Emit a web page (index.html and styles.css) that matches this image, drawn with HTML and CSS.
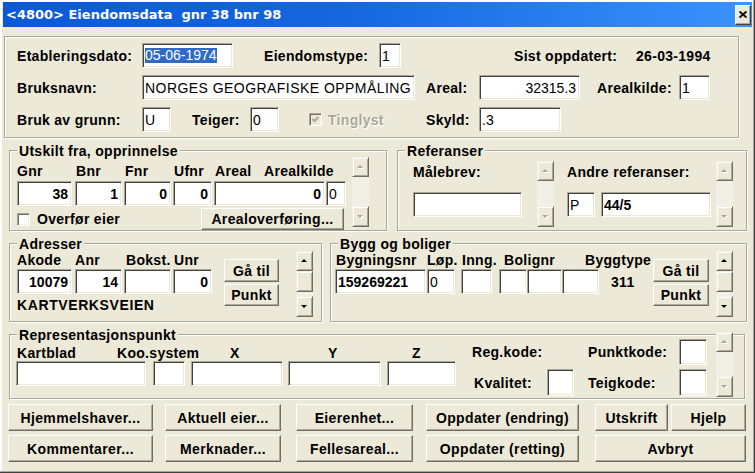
FILE: index.html
```html
<!DOCTYPE html>
<html lang="no">
<head>
<meta charset="utf-8">
<title>Eiendomsdata</title>
<link rel="stylesheet" href="styles.css">
</head>
<body>
<div class="win">
  <div class="titlebar">
    <span class="title">&lt;4800&gt; Eiendomsdata  gnr 38 bnr 98</span>
    <span class="close"><svg width="8" height="7" viewBox="0 0 8 7"><path d="M0.5 0.5 L7.5 6.5 M7.5 0.5 L0.5 6.5" stroke="#000" stroke-width="1.9"/></svg></span>
  </div>

  <div class="panel">
    <div class="prow">
      <span class="lbl c-lab">Etableringsdato:</span>
      <span class="fld f-dato"><span class="sel">05-06-1974</span></span>
      <span class="lbl l-etype">Eiendomstype:</span>
      <span class="fld f-etype">1</span>
      <span class="lbl l-sist">Sist oppdatert:</span>
      <span class="lbl">26-03-1994</span>
    </div>
    <div class="prow">
      <span class="lbl c-lab">Bruksnavn:</span>
      <span class="fld f-navn">NORGES GEOGRAFISKE OPPMÅLING</span>
      <span class="lbl l-areal">Areal:</span>
      <span class="fld f-areal num">32315.3</span>
      <span class="lbl l-akilde">Arealkilde:</span>
      <span class="fld f-akilde">1</span>
    </div>
    <div class="prow">
      <span class="lbl c-lab">Bruk av grunn:</span>
      <span class="fld f-bruk">U</span>
      <span class="lbl l-teiger">Teiger:</span>
      <span class="fld f-teiger">0</span>
      <span class="tingl">
        <span class="chk dis"><svg width="9" height="9" viewBox="0 0 9 9"><path d="M1.5 4 L3.5 6 L7.5 2" fill="none" stroke="#aca899" stroke-width="2"/></svg></span>
        <span class="dtext">Tinglyst</span>
      </span>
      <span class="lbl l-skyld">Skyld:</span>
      <span class="fld f-skyld">.3</span>
    </div>
  </div>

  <div class="mrow mrow1">
    <div class="grp g-utsk">
      <div class="gt">Utskilt fra, opprinnelse</div>
      <div class="gbody ub">
        <div class="ucol">
          <div class="labrow">
            <span class="lbl u-gnr">Gnr</span>
            <span class="lbl u-bnr">Bnr</span>
            <span class="lbl u-fnr">Fnr</span>
            <span class="lbl u-ufnr">Ufnr</span>
            <span class="lbl u-areal">Areal</span>
            <span class="lbl">Arealkilde</span>
          </div>
          <div class="inrow">
            <span class="fld num b ui-gnr">38</span>
            <span class="fld num b ui-bnr">1</span>
            <span class="fld num b ui-fnr">0</span>
            <span class="fld num b ui-ufnr">0</span>
            <span class="fld num b ui-areal">0</span>
            <span class="fld ui-akilde">0</span>
          </div>
          <div class="ubottom">
            <span class="chk"></span>
            <span class="lbl l-overfor">Overfør eier</span>
            <span class="btn b-arealov">Arealoverføring...</span>
          </div>
        </div>
        <div class="sb dis sb-u">
          <span class="sb-btn"><svg width="9" height="6" viewBox="0 0 9 6"><polygon points="2,5 5,2 8,5" fill="#fff"/><polygon points="1,4 4,1 7,4" fill="#aca899"/></svg></span>
          <span class="sb-track"></span>
          <span class="sb-btn"><svg width="9" height="6" viewBox="0 0 9 6"><polygon points="2,2 8,2 5,5" fill="#fff"/><polygon points="1,1 7,1 4,4" fill="#aca899"/></svg></span>
        </div>
      </div>
    </div>

    <div class="grp g-ref">
      <div class="gt">Referanser</div>
      <div class="gbody rb">
        <div class="rcol1">
          <div class="lbl">Målebrev:</div>
          <span class="fld ri-male"></span>
        </div>
        <div class="sb dis sb-r1">
          <span class="sb-btn"><svg width="9" height="6" viewBox="0 0 9 6"><polygon points="2,5 5,2 8,5" fill="#fff"/><polygon points="1,4 4,1 7,4" fill="#aca899"/></svg></span>
          <span class="sb-track"></span>
          <span class="sb-btn"><svg width="9" height="6" viewBox="0 0 9 6"><polygon points="2,2 8,2 5,5" fill="#fff"/><polygon points="1,1 7,1 4,4" fill="#aca899"/></svg></span>
        </div>
        <div class="rcol2">
          <div class="lbl">Andre referanser:</div>
          <div class="inrow rin">
            <span class="fld ri-p">P</span>
            <span class="fld b ri-ref">44/5</span>
          </div>
        </div>
        <div class="sb dis sb-r2">
          <span class="sb-btn"><svg width="9" height="6" viewBox="0 0 9 6"><polygon points="2,5 5,2 8,5" fill="#fff"/><polygon points="1,4 4,1 7,4" fill="#aca899"/></svg></span>
          <span class="sb-track"></span>
          <span class="sb-btn"><svg width="9" height="6" viewBox="0 0 9 6"><polygon points="2,2 8,2 5,5" fill="#fff"/><polygon points="1,1 7,1 4,4" fill="#aca899"/></svg></span>
        </div>
      </div>
    </div>
  </div>

  <div class="mrow mrow2">
    <div class="grp g-adr">
      <div class="gt">Adresser</div>
      <div class="gbody ab">
        <div class="acol">
          <div class="labrow">
            <span class="lbl a-akode">Akode</span>
            <span class="lbl a-anr">Anr</span>
            <span class="lbl a-bokst">Bokst.</span>
            <span class="lbl">Unr</span>
          </div>
          <div class="inrow ain">
            <span class="fld num b ai-akode">10079</span>
            <span class="fld num b ai-anr">14</span>
            <span class="fld ai-bokst"></span>
            <span class="fld num b ai-unr">0</span>
          </div>
          <div class="lbl street">KARTVERKSVEIEN</div>
        </div>
        <div class="sbtns abtns">
          <span class="btn b-ga">Gå til</span>
          <span class="btn b-punkt">Punkt</span>
        </div>
        <div class="sb sb-a">
          <span class="sb-btn"><svg width="9" height="6" viewBox="0 0 9 6"><polygon points="1,4 4,1 7,4" fill="#000"/></svg></span>
          <span class="sb-thumb"></span>
          <span class="sb-track"></span>
          <span class="sb-btn"><svg width="9" height="6" viewBox="0 0 9 6"><polygon points="1,1 7,1 4,4" fill="#000"/></svg></span>
        </div>
      </div>
    </div>

    <div class="grp g-bygg">
      <div class="gt">Bygg og boliger</div>
      <div class="gbody bb">
        <div class="bcol">
          <div class="labrow">
            <span class="lbl y-bnr">Bygningsnr</span>
            <span class="lbl y-lop">Løp.</span>
            <span class="lbl y-inng">Inng.</span>
            <span class="lbl y-bolig">Bolignr</span>
            <span class="lbl">Byggtype</span>
          </div>
          <div class="inrow bin">
            <span class="fld b yi-bnr">159269221</span>
            <span class="fld yi-lop">0</span>
            <span class="fld yi-inng"></span>
            <span class="fld yi-b1"></span>
            <span class="fld yi-b2"></span>
            <span class="fld yi-b3"></span>
            <span class="lbl btype">311</span>
          </div>
        </div>
        <div class="sbtns bbtns">
          <span class="btn b-ga">Gå til</span>
          <span class="btn b-punkt">Punkt</span>
        </div>
        <div class="sb sb-b">
          <span class="sb-btn"><svg width="9" height="6" viewBox="0 0 9 6"><polygon points="1,4 4,1 7,4" fill="#000"/></svg></span>
          <span class="sb-thumb"></span>
          <span class="sb-track"></span>
          <span class="sb-btn"><svg width="9" height="6" viewBox="0 0 9 6"><polygon points="1,1 7,1 4,4" fill="#000"/></svg></span>
        </div>
      </div>
    </div>
  </div>

  <div class="grp g-rep">
    <div class="gt">Representasjonspunkt</div>
    <div class="gbody pb">
      <div class="rpa">
        <div class="labrow">
          <span class="lbl p-kart">Kartblad</span>
          <span class="lbl p-koo">Koo.system</span>
          <span class="lbl p-x">X</span>
          <span class="lbl p-y">Y</span>
          <span class="lbl">Z</span>
        </div>
        <div class="inrow">
          <span class="fld pi-kart"></span>
          <span class="fld pi-koo"></span>
          <span class="fld pi-x"></span>
          <span class="fld pi-y"></span>
          <span class="fld pi-z"></span>
        </div>
      </div>
      <div class="rpb">
        <span class="lbl">Reg.kode:</span>
        <span></span>
        <span class="lbl">Punktkode:</span>
        <span class="fld pi-small1"></span>
        <span class="lbl l-kval">Kvalitet:</span>
        <span class="fld pi-kval"></span>
        <span class="lbl">Teigkode:</span>
        <span class="fld pi-small2"></span>
      </div>
      <div class="sb dis sb-p">
        <span class="sb-btn"><svg width="9" height="6" viewBox="0 0 9 6"><polygon points="2,5 5,2 8,5" fill="#fff"/><polygon points="1,4 4,1 7,4" fill="#aca899"/></svg></span>
        <span class="sb-track"></span>
        <span class="sb-btn"><svg width="9" height="6" viewBox="0 0 9 6"><polygon points="2,2 8,2 5,5" fill="#fff"/><polygon points="1,1 7,1 4,4" fill="#aca899"/></svg></span>
      </div>
    </div>
  </div>

  <div class="brow brow1">
    <span class="btn k1">Hjemmelshaver...</span>
    <span class="btn k2">Aktuell eier...</span>
    <span class="btn k3">Eierenhet...</span>
    <span class="btn k4">Oppdater (endring)</span>
    <span class="btn k5">Utskrift</span>
    <span class="btn k6">Hjelp</span>
  </div>
  <div class="brow brow2">
    <span class="btn k1">Kommentarer...</span>
    <span class="btn k2">Merknader...</span>
    <span class="btn k3">Fellesareal...</span>
    <span class="btn k4">Oppdater (retting)</span>
    <span class="btn k7">Avbryt</span>
  </div>
</div>
</body>
</html>
```

FILE: styles.css
```css
* { box-sizing: border-box; }
html, body { margin: 0; padding: 0; }
body {
  width: 755px;
  height: 473px;
  overflow: hidden;
  background: #ece9d8;
  font-family: "Liberation Sans", Arial, sans-serif;
  font-size: 14px;
  line-height: 16px;
  color: #000;
}
.win {
  width: 755px;
  height: 473px;
  padding-top: 2px;
  background: #ece9d8;
  box-shadow: inset -1px -1px #404040, inset -2px -2px #aca899, inset 2px 2px #fff;
}

/* title bar */
.titlebar {
  margin: 0 3px;
  height: 25px;
  display: flex;
  align-items: center;
  padding: 0 1px 0 3px;
  background: linear-gradient(90deg, #0a58d6 0%, #1566df 45%, #3b93fd 100%);
}
.title {
  flex: 1;
  font-family: "DejaVu Sans", Verdana, sans-serif;
  font-weight: bold;
  font-size: 13px;
  line-height: 16px;
  color: #fff;
  white-space: pre;
}
.close {
  width: 16px;
  height: 20px;
  display: flex;
  align-items: center;
  justify-content: center;
  background: #ece9d8;
  border: 1px solid;
  border-color: #fff #404040 #404040 #fff;
  box-shadow: inset -1px -1px #aca899;
}

/* common controls */
.lbl { font-weight: bold; white-space: nowrap; flex: none; letter-spacing: 0.3px; }
.fld {
  flex: none;
  height: 25px;
  display: flex;
  align-items: center;
  padding: 0 3px 0 2px;
  background: #fff;
  border: 1px solid;
  border-color: #aca899 #fff #fff #aca899;
  box-shadow: inset 1px 1px #404040, inset -1px -1px #ece9d8;
  white-space: nowrap;
  overflow: hidden;
}
.fld.num { justify-content: flex-end; }
.fld.b { font-weight: bold; }
.sel { background: #316ac5; color: #fff; line-height: 15px; }
.btn {
  flex: none;
  display: flex;
  align-items: center;
  justify-content: center;
  font-weight: bold;
  letter-spacing: 0.35px;
  white-space: nowrap;
  background: #ece9d8;
  border: 1px solid;
  border-color: #fff #716f64 #716f64 #fff;
  box-shadow: inset -1px -1px #aca899;
}
.chk {
  flex: none;
  width: 13px;
  height: 13px;
  display: flex;
  align-items: center;
  justify-content: center;
  background: #fff;
  border: 1px solid;
  border-color: #aca899 #fff #fff #aca899;
  box-shadow: inset 1px 1px #716f64, inset -1px -1px #f1efe2;
}
.chk.dis { background: #ece9d8; }
.dtext { color: #aca899; text-shadow: 1px 1px #fff; font-weight: bold; letter-spacing: 0.3px; margin-left: 6px; }

/* top panel */
.panel {
  margin: 9px 0 0 4px;
  width: 735px;
  height: 102px;
  padding: 6px 0 0 12px;
  border: 1px solid #aca899;
  box-shadow: inset 1px 1px #fff, 1px 1px #fff;
}
.prow { display: flex; align-items: center; height: 25px; }
.prow + .prow { margin-top: 7px; }
.c-lab { width: 125px; }
.f-dato { width: 91px; padding-left: 2px; }
.l-etype { margin-left: 31px; width: 115px; }
.f-etype { width: 22px; }
.l-sist { margin-left: 113px; width: 122px; }
.f-navn { width: 273px; letter-spacing: 0.45px; }
.l-areal { margin-left: 11px; width: 53px; }
.f-areal { width: 101px; }
.l-akilde { margin-left: 17px; width: 82px; }
.f-akilde { width: 31px; }
.f-bruk { width: 29px; }
.l-teiger { margin-left: 21px; width: 58px; }
.f-teiger { width: 29px; }
.tingl { margin-left: 30px; width: 117px; display: flex; align-items: center; flex: none; }
.l-skyld { width: 53px; }
.f-skyld { width: 82px; }

/* group boxes */
.grp {
  flex: none;
  border: 1px solid #aca899;
  box-shadow: inset 1px 1px #fff, 1px 1px #fff;
}
.gt {
  display: block;
  width: max-content;
  margin: -8px 0 -8px 7px;
  padding: 0 2px;
  background: #ece9d8;
  font-weight: bold;
  letter-spacing: 0.3px;
  line-height: 16px;
}
.gbody { display: flex; align-items: flex-start; }
.labrow { display: flex; height: 16px; }
.inrow { display: flex; align-items: center; }

/* scrollbars */
.sb { flex: none; width: 17px; display: flex; flex-direction: column; }
.sb-btn {
  flex: none;
  height: 20px;
  display: flex;
  align-items: center;
  justify-content: center;
  background: #ece9d8;
  border: 1px solid;
  border-color: #f1efe2 #716f64 #716f64 #f1efe2;
  box-shadow: inset 1px 1px #fff, inset -1px -1px #aca899;
}
.sb-btn:last-child { height: 21px; }
.sb-thumb {
  flex: none;
  height: 21px;
  background: #ece9d8;
  border: 1px solid;
  border-color: #f1efe2 #716f64 #716f64 #f1efe2;
  box-shadow: inset 1px 1px #fff, inset -1px -1px #aca899;
}
.sb-track { flex: 1; background: #f2f0e6; }

.mrow { display: flex; align-items: flex-start; }
.mrow1 { margin-top: 12px; }
.mrow2 { margin-top: 12px; }

/* Utskilt */
.g-utsk { margin-left: 9px; width: 378px; height: 81px; }
.ub { padding-left: 7px; }
.ucol { width: 329px; margin-top: 12px; }
.u-gnr { width: 59px; }
.u-bnr { width: 49px; }
.u-fnr { width: 49px; }
.u-ufnr { width: 41px; }
.u-areal { width: 49px; }
.ucol .inrow { margin-top: 2px; }
.ui-gnr { width: 55px; }
.ui-bnr { width: 47px; margin-left: 3px; }
.ui-fnr { width: 47px; margin-left: 2px; }
.ui-ufnr { width: 39px; margin-left: 2px; }
.ui-areal { width: 111px; margin-left: 2px; }
.ui-akilde { width: 20px; margin-left: 1px; }
.ubottom { display: flex; align-items: center; height: 22px; margin-top: 2px; }
.l-overfor { margin-left: 7px; }
.b-arealov { margin-left: auto; margin-right: 2px; width: 143px; height: 22px; }
.sb-u { margin-left: 6px; margin-top: 6px; height: 70px; }

/* Referanser */
.g-ref { margin-left: 10px; width: 350px; height: 81px; }
.rb { padding-left: 15px; }
.rcol1 { width: 109px; margin-top: 13px; }
.ri-male { width: 109px; margin-top: 12px; }
.sb-r1 { margin-left: 15px; margin-top: 10px; height: 66px; }
.rcol2 { margin-left: 13px; margin-top: 13px; width: 144px; }
.rin { margin-top: 12px; }
.ri-p { width: 28px; }
.ri-ref { width: 110px; margin-left: 6px; }
.sb-r2 { margin-left: 5px; margin-top: 10px; height: 66px; }

/* Adresser */
.g-adr { margin-left: 9px; width: 313px; height: 79px; }
.ab { padding-left: 7px; }
.acol { width: 195px; margin-top: 8px; }
.a-akode { width: 58px; }
.a-anr { width: 51px; }
.a-bokst { width: 48px; }
.ain { margin-top: 1px; }
.ai-akode { width: 55px; }
.ai-anr { width: 47px; margin-left: 3px; }
.ai-bokst { width: 47px; margin-left: 2px; }
.ai-unr { width: 39px; margin-left: 2px; }
.street { margin-top: 3px; letter-spacing: 0.6px; }
.sbtns { display: flex; flex-direction: column; gap: 2px; margin-top: 15px; }
.b-ga { height: 23px; }
.b-punkt { height: 22px; }
.abtns { margin-left: 12px; width: 55px; }
.sb-a { margin-left: 17px; margin-top: 7px; height: 66px; }

/* Bygg og boliger */
.g-bygg { margin-left: 8px; width: 417px; height: 79px; }
.bb { padding-left: 4px; }
.bcol { width: 316px; margin-top: 8px; }
.y-bnr { width: 92px; padding-left: 1px; }
.y-lop { width: 35px; }
.y-inng { width: 42px; }
.y-bolig { width: 81px; }
.bin { margin-top: 1px; }
.yi-bnr { width: 91px; }
.yi-lop { width: 28px; margin-left: 1px; }
.yi-inng { width: 31px; margin-left: 6px; }
.yi-b1 { width: 28px; margin-left: 7px; }
.yi-b2 { width: 35px; }
.yi-b3 { width: 37px; }
.btype { margin-left: 12px; }
.bbtns { margin-left: 2px; width: 56px; }
.sb-b { margin-left: 7px; margin-top: 7px; height: 66px; }

/* Representasjonspunkt */
.g-rep { margin: 12px 0 0 9px; width: 736px; height: 65px; }
.pb { padding-left: 6px; }
.rpa { width: 440px; margin-top: 10px; }
.p-kart { width: 101px; padding-left: 1px; }
.p-koo { width: 113px; }
.p-x { width: 98px; }
.p-y { width: 84px; }
.pi-kart { width: 130px; }
.pi-koo { width: 32px; margin-left: 7px; }
.pi-x { width: 92px; margin-left: 6px; }
.pi-y { width: 93px; margin-left: 5px; }
.pi-z { width: 69px; margin-left: 6px; }
.rpb {
  margin-left: 16px;
  margin-top: 4px;
  display: grid;
  grid-template-columns: 75px 41px 91px 28px;
  grid-template-rows: 26px 27px;
  row-gap: 4px;
  align-items: center;
}
.l-kval { margin-left: 2px; }
.pi-small1 { width: 28px; height: 26px; }
.pi-kval { width: 27px; height: 27px; }
.pi-small2 { width: 28px; height: 27px; }
.sb-p { margin-left: 9px; margin-top: -3px; height: 65px; }

/* bottom buttons */
.brow { display: flex; height: 27px; }
.brow .btn { height: 27px; }
.brow1 { margin-top: 5px; }
.brow2 { margin-top: 4px; }
.k1 { margin-left: 8px; width: 145px; }
.k2 { margin-left: 12px; width: 116px; }
.k3 { margin-left: 15px; width: 117px; }
.k4 { margin-left: 13px; width: 153px; }
.k5 { margin-left: 16px; width: 73px; }
.k6 { margin-left: 3px; width: 75px; }
.k7 { margin-left: 16px; width: 151px; }
```
